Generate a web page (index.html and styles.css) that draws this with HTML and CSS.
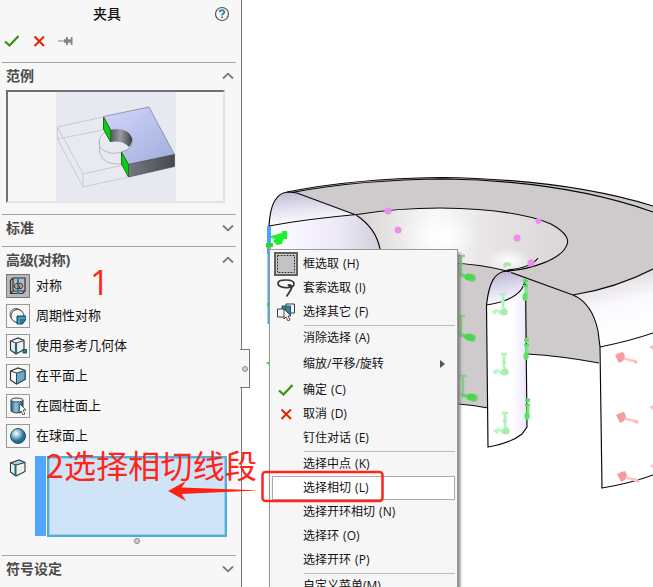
FILE: index.html
```html
<!DOCTYPE html>
<html lang="zh-CN">
<head>
<meta charset="utf-8">
<title>夹具</title>
<link rel="stylesheet" href="styles.css">
</head>
<body>
<main class="app">
  <svg class="model" viewBox="0 0 653 587">
    <defs>
      <linearGradient id="lip" x1="0" y1="0" x2="0.2" y2="1"><stop offset="0" stop-color="#bcb9cf"/><stop offset=".45" stop-color="#dedcec"/><stop offset="1" stop-color="#fff"/></linearGradient>
      <linearGradient id="skin"><stop offset="0" stop-color="#fff"/><stop offset=".3" stop-color="#f7f3ff"/><stop offset=".65" stop-color="#ebe7f5"/><stop offset="1" stop-color="#d2cfd9"/></linearGradient>
      <linearGradient id="cone"><stop offset="0" stop-color="#d8d4d5"/><stop offset=".18" stop-color="#e9e6e6"/><stop offset=".38" stop-color="#faf9f9"/><stop offset=".6" stop-color="#e9e6e6"/><stop offset="1" stop-color="#dad6d7"/></linearGradient>
      <radialGradient id="gleam"><stop offset="0" stop-color="#fff"/><stop offset="1" stop-color="#fff" stop-opacity="0"/></radialGradient>
      <linearGradient id="rim" x1="0" y1="0" x2=".25" y2="1"><stop offset="0" stop-color="#cfcbcc"/><stop offset=".2" stop-color="#dedbdc"/><stop offset=".55" stop-color="#fbf9ff"/><stop offset="1" stop-color="#fff"/></linearGradient>
      <linearGradient id="fin"><stop offset="0" stop-color="#fff"/><stop offset=".65" stop-color="#fff"/><stop offset=".9" stop-color="#f2edff"/><stop offset="1" stop-color="#e4def0"/></linearGradient>
      <linearGradient id="finTop" x1=".3" y1="0" x2=".5" y2="1"><stop offset="0" stop-color="#b9b6cd"/><stop offset=".5" stop-color="#dedbf0"/><stop offset="1" stop-color="#fff"/></linearGradient>
      <g id="load"><path d="M0 0v14M-3 0h6M-2 8h4" stroke="#b0f3b7" stroke-width="2.6"/><path d="M-12 18l6-4v2h4l4-3 2 6-6 2-4-3-2 3z" fill="#b9f8c0"/><circle cx="1" cy="18" r="3.6" fill="#a5efae"/></g>
      <g id="hold"><path d="M0 0v18M-3 0h7" stroke="#86cf89" stroke-width="2.500"/><path d="M-3 17l7 1 2 4-7-1z" fill="#74cb78"/><ellipse cx="8" cy="21" rx="4.500" ry="3.500" fill="#42dc48"/><circle cx="11" cy="22" r="3.800" fill="#54cf58" opacity=".8"/></g>
      <g id="edge"><path d="M1 0v20" stroke="#70ed78" stroke-width="3" stroke-dasharray="5 2 8 1"/><path d="M-2 2h5M-2 7h5" stroke="#58dd61" stroke-width="2"/><ellipse cy="18" rx="2.5" ry="4" fill="#57e561"/></g>
      <g id="pull"><path d="M2 1l15 4" stroke="#ffc3c7" stroke-width="2.4"/><path d="M13 2l5 3-3 2z" fill="#ffb1b5"/><path d="M-5-2l4-2 4-1 2 4-2 5-4 2-2-4z" fill="#f59ca2"/></g>
    </defs>
    <path fill="#cfcbcc" d="M288 192Q358 178 440 177.500Q565 179 653 206V269Q620 287 573 295Q592 304 598 335L600 347L599 363Q560 356 526 354V408H488Q474 405 458 404H380V249L357 215Z"/>
    <path fill="url(#cone)" d="M357 215Q397 208 440 208Q520 209 553 226Q570 236 567 244C563 260 530 270 507 272Q480 263 450 263H385Q380 232 357 215Z"/>
    <ellipse cx="440" cy="236" rx="40" ry="22" fill="url(#gleam)"/>
    <ellipse cx="509" cy="261" rx="22" ry="13" fill="url(#gleam)"/>
    <path fill="url(#skin)" d="M269 226Q310 218 357 215Q376 230 380 249V260H269Z"/>
    <path fill="url(#lip)" d="M269 226C270 206 276 192 289 192L297 193L355 215Q310 218 269 226Z"/>
    <path fill="url(#rim)" d="M573 295Q620 287 653 269V333L600 347C600 323 593 303 573 295Z"/>
    <path fill="#fff" d="M600 347L653 333V475L602 488Z"/>
    <path fill="url(#fin)" d="M486.500 305L525 279L527 427Q520 442 488 447Z"/>
    <path fill="url(#finTop)" d="M486.500 305Q490 272 507 271.500L525 279Q526 299 486.500 305Z"/>
    <g class="outline">
      <path d="M269 226C270 206 276 192 289 192L297 193L356 215Q376 228 380 249M269 226Q306 219 357 214.500Q397 208 440 208Q517 209 551 224Q569 234 567.500 243C564 259 530 270 505 271"/>
      <path d="M287 192Q355 178.500 440 177.500Q565 179 653 206M292 192.500Q360 179.500 446 179Q565 181 653 212"/>
      <path d="M450 263Q480 264 507 271L573 295Q592 303 598 331L600 347L602 488Q632 483 653 475M573 295Q616 288 653 269M600 347Q630 341 653 333M458 404Q473 405 488 408M527 354Q562 356 599 363"/>
      <path d="M507 271C494 272 489 283 486.500 305L488 447Q511 443 522 434L527 427L525.500 279M486.500 305Q524 299 525 279M507 270Q531 268 538 258"/>
    </g>
    <g fill="#ed8eee"><circle cx="388" cy="211" r="3.500"/><circle cx="398" cy="230" r="3.500"/><circle cx="517" cy="238" r="3.500"/><circle cx="538.500" cy="221" r="3"/><circle cx="531" cy="263" r="3.500"/><circle cx="510" cy="273" r="1.300"/></g>
    <path d="M503 264l3-2 5 1v3h-4l-3 2z" fill="#a7e8ad"/>
    <use href="#hold" x="461" y="256"/><use href="#hold" x="461" y="316"/><use href="#hold" x="463" y="376"/>
    <use href="#load" x="503" y="294"/><use href="#load" x="504" y="354"/><use href="#load" x="505" y="413"/>
    <use href="#edge" x="525" y="279"/><use href="#edge" x="526" y="338"/><use href="#edge" x="527" y="398"/>
    <use href="#pull" x="620" y="357"/><use href="#pull" x="621" y="417"/><use href="#pull" x="622" y="476"/>
    <path d="M653 345l-4 2 4 3zM653 405l-4 2 4 3zM653 464l-3 2 3 2z" fill="#ffc0c4"/>
    <path d="M269 226v28" stroke="#4ba3ff" stroke-width="4"/><path d="M268.500 254v70" stroke="#4ba3ff" stroke-width="2"/>
    <path d="M271 236l11-3v-2h5v8h-3l-1 1-1 4-5 1-4-4 2-2-4-1z" fill="#1cf22b"/><path d="M266 243h7v4h-7zM267 303h2v3h-2zM266 362h4v3h-1z" fill="#10e81d"/><path d="M266 248h5" stroke="#ff8b34"/>
  </svg>

  <aside class="panel">
    <header class="panel-title"><h1>夹具</h1>
      <svg class="help" viewBox="0 0 16 16"><circle cx="8" cy="8" r="6.500" fill="#f7f7f7" stroke="#4c5660" stroke-width="1.200"/><path d="M5.700 6.200Q5.900 4.200 8 4.200T10.200 6.200Q10.200 7.200 8.900 8Q8 8.600 8 9.600M8 10.600v1.500" fill="none" stroke="#2784a6" stroke-width="1.800"/></svg>
    </header>
    <div class="actions">
      <svg viewBox="0 0 16 14"><path class="check" d="M1 7.500L5.500 11.500L14.500 2"/></svg>
      <svg viewBox="0 0 16 14"><path class="cross" d="M3.500 2.500L13 12M13 2.500L3.500 12"/></svg>
      <svg viewBox="0 0 16 14"><path d="M0 6.500h6V5l2 .5V3h1.500l1 2.500h2L13 3h1.500v8H13l-.5-2.500h-2L9.500 11H8V8.500L6 9V7.500H0z" fill="#858585"/></svg>
    </div>
    <section class="example">
      <h2><span>范例</span><svg class="chevron" viewBox="0 0 12 8"><path d="M1 6.500L6 1.700L11 6.500"/></svg></h2>
      <div class="preview">
        <svg viewBox="56 92 120 110">
          <defs><linearGradient id="plate" x1="0" y1="0" x2="1" y2="1"><stop stop-color="#d4d5fa"/><stop offset="1" stop-color="#9eaedc"/></linearGradient><linearGradient id="hole"><stop stop-color="#55555e"/><stop offset=".45" stop-color="#9b9ba5"/><stop offset="1" stop-color="#3e3e47"/></linearGradient><linearGradient id="side"><stop stop-color="#77777f"/><stop offset="1" stop-color="#484850"/></linearGradient></defs>
          <path fill="#e8e8f1" d="M56 92h120v110H56z"/>
          <path d="M103 117L57.500 127V139L83 187L128.500 177M57.500 127L83 174L128 164M83 174V187M57.500 139L103 130" fill="#eaebef" fill-opacity=".6" stroke="#c9c9d1"/>
          <path d="M110 130C97 134 96 148 105 151Q113 155 122 152M99.500 139V152Q103 165 120 164L123 164" fill="none" stroke="#b7b7c0"/>
          <path d="M103.500 116.500L149 107L174.500 154.500L128.500 164.500L121.500 152Q134 149 132 138Q126 128 111 130Z" fill="url(#plate)" stroke="#777e92" stroke-width=".7"/>
          <path d="M110.500 130Q128 127 132 138Q133 142 129 147Q122 140 110.500 142Z" fill="url(#hole)"/>
          <path d="M128.500 164.500L174.500 154.500V166.500L128.500 177Z" fill="url(#side)" stroke="#4c4c53" stroke-width=".7"/>
          <path d="M103.500 117L110.500 130V142L103.500 129ZM121.500 152L128.500 164.500V177L121.500 164Z" fill="#08ce16" stroke="#167619"/>
        </svg>
      </div>
    </section>
    <section class="standard"><h2><span>标准</span><svg class="chevron" viewBox="0 0 12 8"><path d="M1 1.500L6 6.300L11 1.500"/></svg></h2></section>
    <section class="advanced">
      <h2><span class="tight">高级(对称)</span><svg class="chevron" viewBox="0 0 12 8"><path d="M1 6.500L6 1.700L11 6.500"/></svg></h2>
      <ul class="types">
        <li><span class="tool pressed"><svg viewBox="0 0 18 18"><path d="M1.500 3.500L4 1h12v13l-2.500 2.500h-12zM4 1v13l-2.500 2.500M4 14h12" fill="none" stroke="#303437" stroke-width="1.200"/><path d="M9 1v16" stroke="#1e85ad" stroke-width="2"/><path d="M5 8l3-2 3 4-2 2-3-1zM9 7l3-1 2 3-2 3-3-1z" fill="#aaa" stroke="#333" stroke-width=".9"/></svg></span><span class="label">对称</span></li>
        <li><span class="tool"><svg viewBox="0 0 18 18"><circle cx="7" cy="7.500" r="6" fill="#eee" stroke="#555"/><circle cx="8.500" cy="9" r="6.500" fill="#f8f8f8" stroke="#3e4448"/><path d="M8 9h8.500v4l-3 4H8z" fill="#277ba1" stroke="#164b66"/><path d="M10 11h6.500M10 11v6" stroke="#75bdd8"/></svg></span><span class="label">周期性对称</span></li>
        <li><span class="tool"><svg viewBox="0 0 18 18"><path d="M1.500 4L9 1l6 2.500v9L7 17l-5.500-4z" fill="#eee" stroke="#33383b" stroke-width="1.200"/><path d="M2 4L7 6l8-2.500" fill="#fff" stroke="#33383b"/><path d="M7 6v11" stroke="#176889" stroke-width="2.200"/><path d="M14 12.500h3.500V16H14z" fill="#2f83a6" stroke="#174a61"/></svg></span><span class="label">使用参考几何体</span></li>
        <li><span class="tool"><svg viewBox="0 0 18 18"><path d="M1.500 4L9 1l7 2.500v9L7.500 17l-6-4z" fill="#f7f7f7" stroke="#33383b" stroke-width="1.200"/><path d="M7.500 6L16 3.500v9L7.500 17z" fill="#6aaac6" stroke="#26495a"/><path d="M1.500 4l6 2" stroke="#33383b"/></svg></span><span class="label">在平面上</span></li>
        <li><span class="tool"><svg viewBox="0 0 18 18"><defs><linearGradient id="cyl"><stop stop-color="#22617e"/><stop offset=".4" stop-color="#8fc7df"/><stop offset="1" stop-color="#225d78"/></linearGradient></defs><path d="M2 3v11q6 4 12 0V3" fill="url(#cyl)" stroke="#28434d"/><ellipse cx="8" cy="3" rx="6" ry="2" fill="#eee" stroke="#3b4347"/><path d="M11 7l6 6h-3l2 4-2 1-2-4-2 2z" fill="#fff" stroke="#333" stroke-width=".8"/></svg></span><span class="label">在圆柱面上</span></li>
        <li><span class="tool"><svg viewBox="0 0 18 18"><defs><radialGradient id="ball" cx=".38" cy=".33"><stop stop-color="#fff"/><stop offset=".5" stop-color="#8cc3dc"/><stop offset="1" stop-color="#246d91"/></radialGradient></defs><circle cx="9" cy="9" r="7.500" fill="url(#ball)" stroke="#304f60"/></svg></span><span class="label">在球面上</span></li>
      </ul>
      <div class="selection">
        <svg class="face-icon" viewBox="0 0 18 18"><path d="M1.500 4L10 1l6 2.500v9L7 17l-5.500-4z" fill="#eee" stroke="#30373b" stroke-width="1.100"/><path d="M1.500 4L10 1l6 2.500L7 6z" fill="#a9d7e5" stroke="#30373b"/><path d="M6.500 6v11" stroke="#186a89" stroke-width="2"/></svg>
        <div class="color-strip"></div><div class="entities"></div>
      </div>
      <i class="grip"></i>
    </section>
    <section class="symbols"><h2><span>符号设定</span><svg class="chevron" viewBox="0 0 12 8"><path d="M1 1.500L6 6.300L11 1.500"/></svg></h2></section>
    <div class="flyout"><i class="grip"></i></div>
  </aside>

  <nav class="menu">
    <div class="item"><span class="icon"><svg class="box-select" viewBox="0 0 24 24"><path d="M1 1h22v22H1z" fill="#cdcdcd" stroke="#606060" stroke-width="2"/><path d="M3.500 3.500h17v17h-17z" fill="#c1c3c4" stroke="#fff"/><path d="M3.500 3.500h17v17h-17z" fill="none" stroke="#222" stroke-dasharray="2 1"/></svg></span>框选取 (H)</div>
    <div class="item"><span class="icon"><svg viewBox="0 0 18 18"><path d="M14 8C11 9.500 1 8.500 1 4.800S5 1 9 1s8 1 8 3.800S15 8 12.500 7.200 12 5 14 6.500 14 11 9.500 17.500" fill="none" stroke="#34383b" stroke-width="1.700"/></svg></span>套索选取 (I)</div>
    <div class="item"><span class="icon"><svg viewBox="0 0 18 18"><path d="M9 1h8.500v9H9z" fill="#eee" stroke="#374044"/><path d="M5 3h8.500v9H5z" fill="#377fa1" stroke="#28566b"/><path d="M.5 6h8v8h-8z" fill="#f5f5f5" stroke="#374044"/><path d="M7 6l7 7h-3l2 4-2 1-2-4-2 2z" fill="#fff" stroke="#333" stroke-width=".9"/></svg></span>选择其它 (F)</div>
    <hr>
    <div class="item">消除选择 (A)</div>
    <div class="item submenu">缩放/平移/旋转</div>
    <div class="item"><span class="icon"><svg class="mark" viewBox="0 0 16 14"><path class="check" d="M1 7.500L5.500 11.500L14.500 2"/></svg></span>确定 (C)</div>
    <div class="item"><span class="icon"><svg class="mark" viewBox="0 0 16 14"><path class="cross" d="M3.500 2.500L13 12M13 2.500L3.500 12"/></svg></span>取消 (D)</div>
    <div class="item">钉住对话 (E)</div>
    <hr>
    <div class="item">选择中点 (K)</div>
    <div class="item active">选择相切 (L)</div>
    <div class="item">选择开环相切 (N)</div>
    <div class="item">选择环 (O)</div>
    <div class="item">选择开环 (P)</div>
    <hr>
    <div class="item last">自定义菜单(M)</div>
  </nav>
  <span class="note note-one">1</span>
  <span class="note note-two">2选择相切线段</span>
  <svg class="callout" viewBox="0 0 653 587"><path d="M168 491L186 481L181.500 487.500L258 490.300L181.500 494L186 501Z" fill="#ff2012"/><rect x="262.500" y="472" width="120" height="29" rx="3" fill="none" stroke="#ff2519" stroke-width="2.500"/></svg>
</main>
</body>
</html>
```
FILE: styles.css
```css
* { box-sizing: border-box; }
body { margin: 0; background: #fff; color: #111; font-family: "Open Sans", "Noto Sans CJK SC", sans-serif; font-size: 13px; }
.app { position: relative; width: 653px; height: 587px; overflow: hidden; }
svg { display: block; }
.model, .callout { position: absolute; inset: 0; width: 653px; height: 587px; pointer-events: none; }
.outline { fill: none; stroke: #080808; stroke-width: 1.15; }

.panel { position: relative; width: 242px; height: 587px; padding-left: 2px; background: #f7f7f7; border-right: 1px solid #777; }
.panel-title { display: flex; justify-content: center; align-items: center; height: 28px; width: 235px; padding-left: 83px; }
h1, h2 { margin: 0; font-size: 14px; line-height: 20px; }
h1 { flex: 1; font-weight: 500; padding-left: 8px; }
.help { width: 16px; height: 16px; margin-right: 7px; }
.actions { display: flex; gap: 11px; height: 34px; padding: 6px 0 0 2px; }
.actions svg { width: 16px; height: 14px; }
.check { fill: none; stroke: #36940c; stroke-width: 2.2; }
.cross { fill: none; stroke: #df2500; stroke-width: 2; }
.panel section { width: 234px; border-top: 1px solid #a6a6a6; }
.panel h2 { display: flex; align-items: center; justify-content: space-between; height: 27px; padding: 0 2px 1px 4px; color: #4a4a4a; font-weight: 700; }
.panel h2 span { padding-bottom: 1px; }
.chevron { width: 12px; height: 8px; fill: none; stroke: #777; stroke-width: 1.8; }
.panel .tight { letter-spacing: -.25px; }
.example { height: 152px; }
.preview { display: flex; justify-content: center; width: 219px; height: 113px; margin-left: 4px; border: 2px solid; border-color: #707070 #e2e2e2 #e2e2e2 #707070; }
.preview svg { width: 120px; height: 110px; }
.standard { height: 32px; }
.advanced { height: 309px; }
.types { list-style: none; display: grid; gap: 6px; margin: 0; padding: 0 0 0 4px; }
.types li { display: flex; align-items: center; gap: 6px; height: 24px; line-height: 20px; }
.label { padding-bottom: 2px; }
.tool { display: grid; place-items: center; width: 24px; height: 24px; border: 1px solid #999; background: #f7f7f7; }
.tool.pressed { background: #b9b9b9; border-color: #777; }
.tool svg { width: 18px; height: 18px; }
.selection { display: flex; height: 81px; margin-top: 8px; padding-left: 7px; }
.face-icon { width: 18px; height: 18px; margin: 3px 8px 0 0; }
.color-strip { width: 11px; height: 80px; background: #52a6ff; margin-right: 1px; }
.entities { width: 180px; height: 81px; border: 2px solid #51addd; background: #d0e4f8; box-shadow: inset 0 0 0 1px #a4cbea; }
.grip { display: block; width: 6px; height: 6px; border: 1px solid #888; border-radius: 50%; background: #d2d2d2; margin: 1px 0 0 132px; }
.flyout { position: absolute; left: 240px; top: 349px; width: 10px; height: 39px; background: #f7f7f7; border: 1px solid #777; border-left: 0; }
.flyout .grip { margin: 16px 0 0 2px; }

.menu { position: absolute; left: 269px; top: 249px; width: 189px; height: 350px; padding-top: 2px; background: #f6f6f6; border: 1px solid #999; box-shadow: 2px 4px 3px #777; font-size: 12px; }
.item { position: relative; display: flex; align-items: center; height: 24px; padding-left: 33px; line-height: 20px; white-space: pre; word-spacing: 1px; }
.icon { width: 24px; height: 24px; margin-left: -29px; margin-right: 5px; display: grid; place-items: center; }
.icon svg { width: 18px; height: 18px; }
.icon .box-select { width: 24px; height: 24px; }
.icon .mark { width: 16px; height: 14px; }
.menu hr { height: 1px; border: 0; background: #bbb; margin: 1px 2px 0 34px; }
.submenu { height: 28px; justify-content: space-between; padding-right: 12px; }
.submenu::after { content: ""; border: 4px solid transparent; border-left: 5px solid #555; border-right: 0; }
.active { background: #fff; border: 1px solid #aaa; margin: 0 2px; padding-left: 30px; }
.last { height: 24px; }

.note { position: absolute; color: #ff2519; white-space: nowrap; font-family: "Noto Sans CJK SC", sans-serif; }
.note-one { left: 90px; top: 262px; font-family: "Open Sans", sans-serif; font-size: 34px; line-height: 40px; }
.note-two { left: 46px; top: 444px; font-size: 32px; line-height: 40px; letter-spacing: .2px; }
```
